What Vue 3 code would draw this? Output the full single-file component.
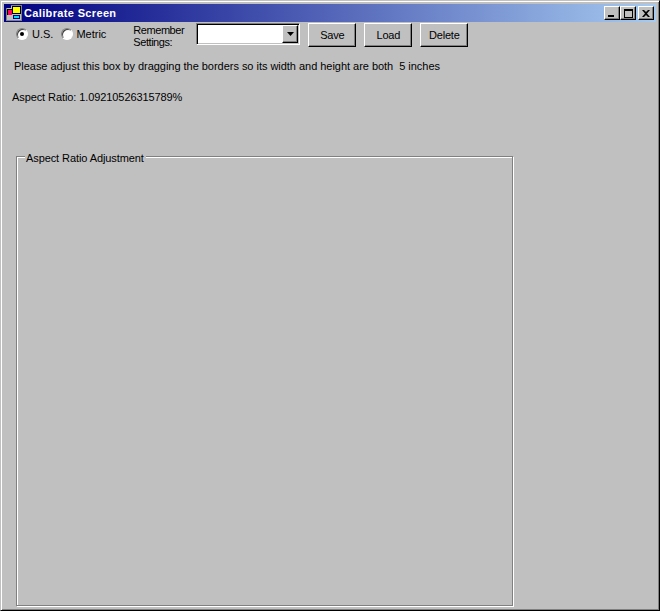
<script setup>
const buttons = ['Save', 'Load', 'Delete']
</script>

<template>
  <div class="window">
    <header class="titlebar">
      <svg class="appicon" width="16" height="16" viewBox="0 0 16 16">
        <rect x="0" y="0" width="16" height="16" fill="#808080" />
        <rect x="1" y="1" width="14" height="14" fill="#c0c0c0" />
        <rect x="0" y="0" width="5" height="3" fill="#000080" />
        <rect x="1" y="4" width="5" height="6" fill="#000" />
        <rect x="2" y="5" width="4" height="5" fill="#ff0060" />
        <rect x="6" y="1" width="9" height="8" fill="#000" />
        <rect x="7" y="2" width="7" height="6" fill="#ffff00" />
        <rect x="7" y="10" width="7" height="4" fill="#000080" />
        <rect x="8" y="11" width="5" height="2" fill="#00e0ff" />
      </svg>
      <span class="title">Calibrate Screen</span>
      <div class="caption-buttons">
        <button class="cap cap-min"><i></i></button>
        <button class="cap cap-max"><i></i></button>
        <button class="cap cap-close">
          <svg width="8" height="7" viewBox="0 0 8 7"><path d="M0 0h2l2 2 2-2h2L5 3.500 8 7H6L4 5 2 7H0l3-3.500z" fill="#000" /></svg>
        </button>
      </div>
    </header>

    <main class="client">
      <div class="toolbar">
        <label class="radio first"><span class="dot checked"></span>U.S.</label>
        <label class="radio second"><span class="dot"></span>Metric</label>
        <span class="remember">Remember<br />Settings:</span>
        <div class="combo">
          <span class="arrow"><svg width="7" height="4" viewBox="0 0 7 4"><path d="M0 0h7L3.500 4z" fill="#000" /></svg></span>
        </div>
        <button v-for="b in buttons" :key="b" class="btn">{{ b }}</button>
      </div>

      <p class="hint">Please adjust this box by dragging the borders so its width and height are both&nbsp; 5 inches</p>
      <p class="ratio">Aspect Ratio: 1.09210526315789%</p>

      <section class="group">
        <span class="legend">Aspect Ratio Adjustment</span>
      </section>
    </main>
  </div>
</template>

<style>
html, body { margin: 0; background: #c0c0c0; }
</style>

<style scoped>
.window {
  box-sizing: border-box;
  width: 660px;
  height: 611px;
  background: #c0c0c0;
  border-top: 1px solid #c0c0c0;
  border-left: 1px solid #c0c0c0;
  border-right: 1px solid #000;
  border-bottom: 1px solid #000;
  box-shadow: inset 1px 1px 0 #fff, inset -1px -1px 0 #808080;
  padding: 3px;
  display: flex;
  flex-direction: column;
  font: 11px/13px "Liberation Sans", Arial, sans-serif;
  color: #000;
}
.titlebar {
  height: 18px;
  flex: none;
  display: flex;
  align-items: center;
  padding: 0 2px 0 2px;
  background: linear-gradient(90deg, #000080, #a6caf0);
}
.appicon { flex: none; }
.title {
  margin-left: 2px;
  color: #fff;
  font: bold 11px "Liberation Sans", Arial, sans-serif;
  letter-spacing: 0.35px;
}
.caption-buttons { margin-left: auto; display: flex; }
.cap {
  box-sizing: border-box;
  width: 16px;
  height: 14px;
  padding: 0;
  background: #c0c0c0;
  border: 1px solid;
  border-color: #fff #000 #000 #fff;
  box-shadow: inset -1px -1px 0 #808080;
  display: flex;
  align-items: center;
  justify-content: center;
  position: relative;
}
.cap-close { margin-left: 2px; }
.cap-min i { display: block; width: 6px; height: 2px; background: #000; margin: 6px 3px 0 0; }
.cap-max i { display: block; width: 9px; height: 9px; box-sizing: border-box; border: 1px solid #000; border-top-width: 2px; }
.client { flex: 1; position: relative; min-height: 0; }
.toolbar { display: flex; align-items: flex-start; height: 26px; padding-top: 1px; box-sizing: border-box; }
.radio { display: flex; align-items: center; height: 13px; margin-top: 5px; }
.first { margin-left: 12px; }
.dot {
  box-sizing: border-box;
  width: 12px;
  height: 12px;
  margin: -2px 4px 0 0;
  border-radius: 50%;
  background: #fff;
  border: 1px solid #808080;
  border-right-color: #fff;
  border-bottom-color: #fff;
  box-shadow: inset 1px 1px 0 #404040;
  position: relative;
}
.dot.checked::after {
  content: "";
  position: absolute;
  left: 3px;
  top: 3px;
  width: 4px;
  height: 4px;
  border-radius: 50%;
  background: #000;
}
.second { margin-left: 8px; }
.second .dot { margin-right: 3px; }
.remember { margin: 1px 0 0 27px; width: 63px; line-height: 12px; letter-spacing: -0.45px; }
.combo {
  box-sizing: border-box;
  width: 104px;
  height: 22px;
  background: #fff;
  border: 1px solid;
  border-color: #808080 #fff #fff #808080;
  box-shadow: inset 1px 1px 0 #000, inset -1px -1px 0 #c0c0c0;
  display: flex;
  justify-content: flex-end;
  padding: 1px 1px 1px 2px;
}
.arrow {
  box-sizing: border-box;
  width: 16px;
  height: 18px;
  background: #c0c0c0;
  border: 1px solid;
  border-color: #fff #000 #000 #fff;
  box-shadow: inset -1px -1px 0 #808080;
  display: flex;
  align-items: center;
  justify-content: center;
}
.btn {
  box-sizing: border-box;
  width: 48px;
  height: 24px;
  margin-left: 8px;
  padding: 0;
  background: #c0c0c0;
  border: 1px solid;
  border-color: #fff #000 #000 #fff;
  box-shadow: inset -1px -1px 0 #808080;
  font: inherit;
  letter-spacing: -0.2px;
  color: #000;
}
.hint { margin: 12px 0 0 10px; white-space: nowrap; letter-spacing: -0.03px; }
.ratio { margin: 18px 0 0 8px; white-space: nowrap; letter-spacing: -0.09px; }
.group {
  box-sizing: border-box;
  position: relative;
  width: 497px;
  height: 450px;
  margin: 52px 0 0 12px;
  border: 1px solid #808080;
  box-shadow: inset 1px 1px 0 #fff, 1px 1px 0 #fff;
}
.legend {
  position: absolute;
  left: 8px;
  top: -5px;
  padding: 0 2px 0 1px;
  background: #c0c0c0;
  letter-spacing: -0.09px;
}
</style>
